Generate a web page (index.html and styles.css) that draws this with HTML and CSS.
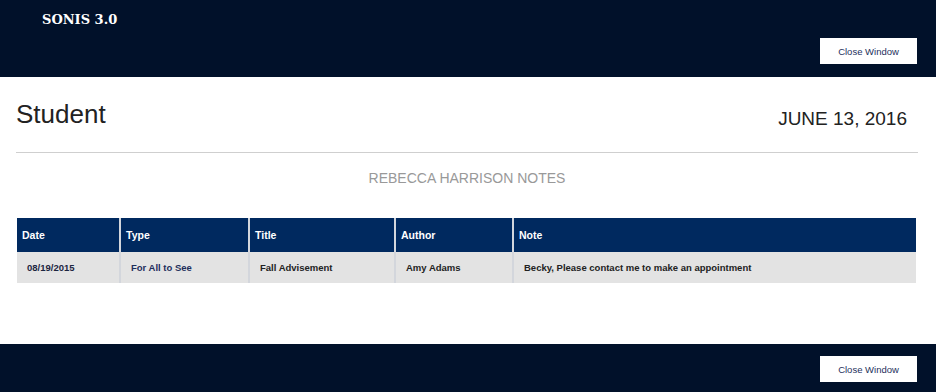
FILE: index.html
```html
<!DOCTYPE html>
<html lang="en">

<head>
  <meta charset="UTF-8">
  <meta name="viewport" content="width=device-width, initial-scale=1.0">
  <title>Student Notes</title>
  <link rel="stylesheet" href="styles.css">
</head>

<body>
  <header class="topbar">
    <div class="brand">SONIS 3.0</div>
    <button class="close-btn">Close Window</button>
  </header>

  <main class="main">
    <div class="page-head">
      <h1 class="page-title">Student</h1>
      <div class="page-date">JUNE 13, 2016</div>
    </div>
    <hr class="divider">

    <h2 class="caption">REBECCA HARRISON NOTES</h2>

    <table class="notes">
      <colgroup>
        <col class="col-date">
        <col class="col-type">
        <col class="col-title">
        <col class="col-author">
        <col>
      </colgroup>
      <thead>
        <tr>
          <th>Date</th>
          <th>Type</th>
          <th>Title</th>
          <th>Author</th>
          <th>Note</th>
        </tr>
      </thead>
      <tbody>
        <tr>
          <td class="cell-date">08/19/2015</td>
          <td class="cell-type">For All to See</td>
          <td>Fall Advisement</td>
          <td>Amy Adams</td>
          <td>Becky, Please contact me to make an appointment</td>
        </tr>
      </tbody>
    </table>
  </main>

  <footer class="bottombar">
    <button class="close-btn">Close Window</button>
  </footer>
</body>

</html>
```

FILE: styles.css
```css
:root {
  --navy-dark: #01112a;
  --navy: #00295f;
}

* {
  padding: 0;
  margin: 0;
}

body {
  font-family: "Liberation Sans", Arial, sans-serif;
  color: #222;
  background: #fff;
}

.topbar {
  box-sizing: border-box;
  height: 77px;
  padding: 11px 19px 13px 42px;
  display: flex;
  flex-direction: column;
  background-color: var(--navy-dark);
}

.brand {
  font-family: "DejaVu Serif", Georgia, serif;
  font-weight: bold;
  font-size: 13px;
  line-height: 18px;
  color: #fff;
}

.close-btn {
  width: 97px;
  height: 26px;
  border: none;
  background: #fff;
  color: #24305c;
  font-family: "Liberation Sans", Arial, sans-serif;
  font-size: 9.5px;
  cursor: pointer;
}

.topbar .close-btn {
  margin-top: auto;
  align-self: flex-end;
}

.main {
  padding: 0 18px 0 16px;
}

.page-head {
  display: flex;
  justify-content: space-between;
  align-items: flex-start;
  padding-top: 22px;
}

.page-title {
  font-weight: normal;
  font-size: 26px;
  line-height: 30px;
  color: #222;
}

.page-date {
  margin-top: 9px;
  margin-right: 11px;
  font-size: 19px;
  line-height: 22px;
  color: #222;
}

.divider {
  margin-top: 22px;
  border: none;
  border-top: 1px solid #cfcfcf;
}

.caption {
  margin-top: 17px;
  text-align: center;
  font-weight: normal;
  font-size: 14px;
  line-height: 16px;
  color: #999;
}

.notes {
  width: 899px;
  margin: 32px 0 0 1px;
  table-layout: fixed;
  border-collapse: collapse;
  font-weight: bold;
}

.col-date {
  width: 103px;
}

.col-type {
  width: 129px;
}

.col-title {
  width: 146px;
}

.col-author {
  width: 118px;
}

.notes th {
  height: 34px;
  padding: 0 5px;
  text-align: left;
  font-size: 10.5px;
  color: #fff;
  background-color: var(--navy);
}

.notes td {
  height: 31px;
  padding: 0 10px;
  font-size: 9.5px;
  background-color: #e3e3e3;
}

.notes th+th,
.notes td+td {
  border-left: 2px solid #d3d6dc;
}

.notes .cell-date {
  color: #1c2540;
}

.notes .cell-type {
  color: #1e2f5c;
}

.bottombar {
  box-sizing: border-box;
  height: 48px;
  margin-top: 61px;
  padding: 12px 19px 10px;
  display: flex;
  justify-content: flex-end;
  background-color: var(--navy-dark);
}
```
